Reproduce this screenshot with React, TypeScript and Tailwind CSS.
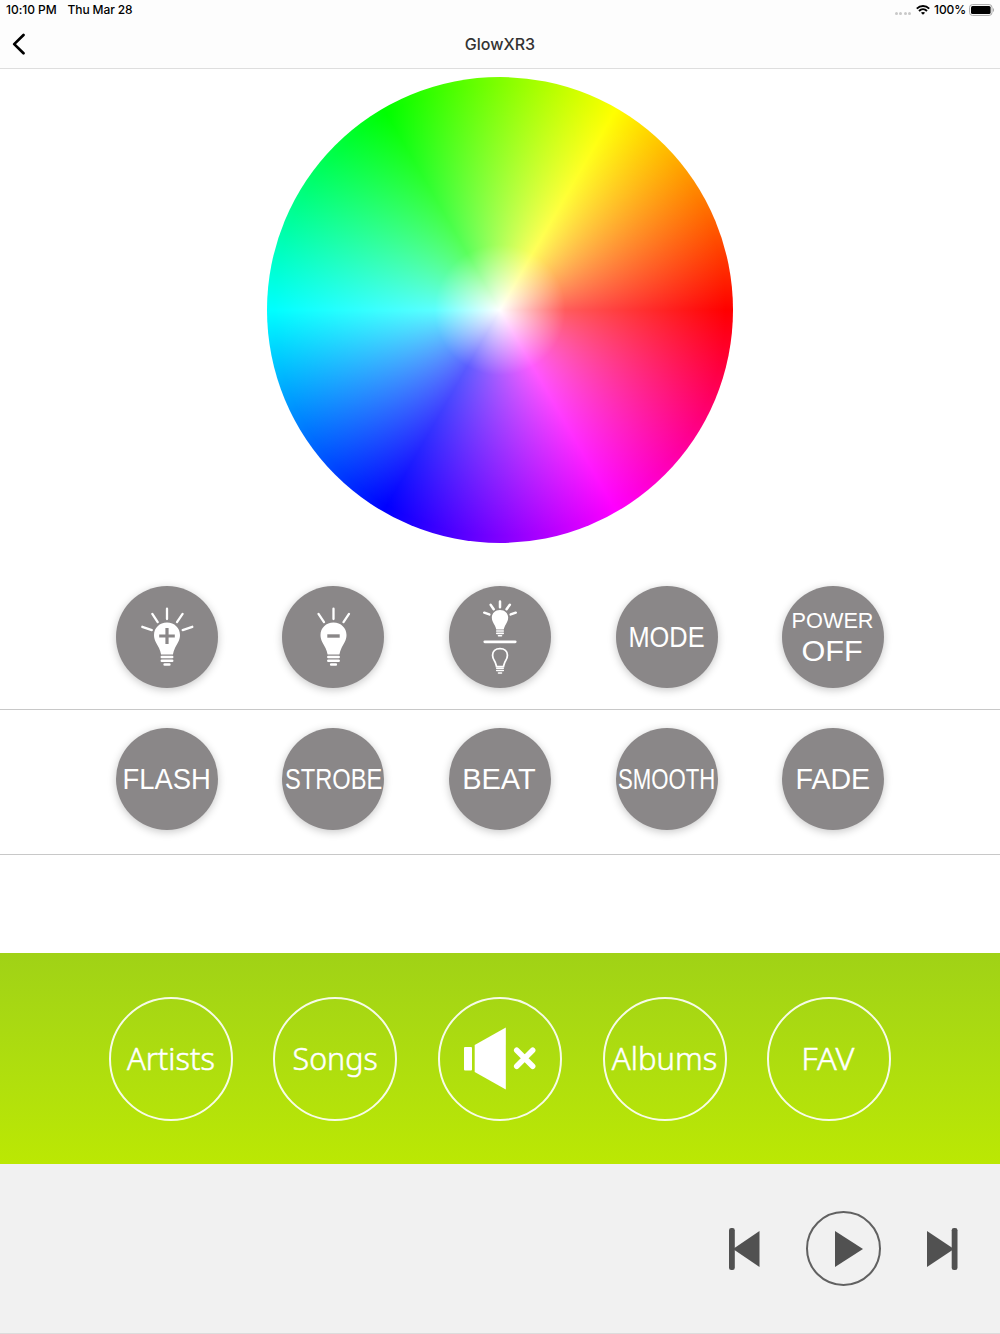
import type { ReactNode } from "react";

function Round({ children }: { children: ReactNode }) {
  return (
    <div className="flex justify-center">
      <button className="flex size-[102px] shrink-0 flex-col items-center justify-center rounded-full bg-[#8a8788] font-['Liberation_Sans',sans-serif] text-white shadow-[0_2px_8px_rgba(0,0,0,0.22)]">
        {children}
      </button>
    </div>
  );
}

function Label({ text, className }: { text: string; className: string }) {
  return <span className={`block text-[29px] leading-[30px] whitespace-nowrap ${className}`}>{text}</span>;
}

function Outline({ children }: { children: ReactNode }) {
  return (
    <div className="flex justify-center">
      <button className="flex size-[124px] shrink-0 items-center justify-center rounded-full border-2 border-white/90 font-['Noto_Sans',sans-serif] text-[31.500px] font-light text-white [-webkit-text-stroke:0.5px_white]">
        {children}
      </button>
    </div>
  );
}

/* Bulb silhouette centred on x = 0, globe centre at y = 0 */
const BULB = "M0-13C7.5-13 13-7.5 13-.5C13 5 10 8.500 8 12.500C7 14.800 6.300 17 5.900 19H-5.900C-6.300 17-7 14.800-8 12.500C-10 8.500-13 5-13-.5C-13-7.500-7.500-13 0-13Z";

function Base() {
  return (
    <g stroke="currentColor" strokeLinecap="round" strokeWidth="2.500">
      <path d="M-5.200 21.400H5.200M-5.200 25.200H5.200M-2.400 29H2.400" />
    </g>
  );
}

function BulbPlus() {
  return (
    <svg viewBox="0 0 102 102" className="size-[102px]" fill="none">
      <g transform="translate(51 49.500)">
        <path d={BULB} fill="currentColor" />
        <Base />
        <path d="M-7.800.5H7.800M0-7.400V8.400" stroke="#8a8788" strokeWidth="3.200" strokeLinecap="butt" />
        <path d="M0-26.800V-16.400M-14.700-21.600L-9.300-13.400M15.600-21.600L10-13.400M-24.700-8.700L-15.200-5.400M25.300-8.700L15.700-5.400" stroke="currentColor" strokeWidth="2.300" strokeLinecap="round" />
      </g>
    </svg>
  );
}

function BulbMinus() {
  return (
    <svg viewBox="0 0 102 102" className="size-[102px]" fill="none">
      <g transform="translate(51.500 49.500)">
        <path d={BULB} fill="currentColor" />
        <Base />
        <path d="M-6.200.5H6.200" stroke="#8a8788" strokeWidth="3.400" strokeLinecap="butt" />
        <path d="M0-26.800V-16.400M-15-21.600L-9.500-13.400M15.500-21.600L10-13.400" stroke="currentColor" strokeWidth="2.300" strokeLinecap="round" />
      </g>
    </svg>
  );
}

function BulbToggle() {
  return (
    <svg viewBox="0 0 102 102" className="size-[102px]" fill="none">
      <g transform="translate(51 32) scale(.63 .61)">
        <path d={BULB} fill="currentColor" />
        <Base />
        <path d="M0-27V-17.500M-14.800-21.600L-10-14.400M15.600-21.600L10.400-14.400M-25-8.700L-17-5.800M25-8.700L17-5.800" stroke="currentColor" strokeWidth="4" strokeLinecap="round" />
      </g>
      <path d="M35.800 55.800H66.200" stroke="currentColor" strokeWidth="2.800" strokeLinecap="round" />
      <g transform="translate(51 69.500) scale(.63 .6)">
        <path d="M0-11.500C7-11.500 11.800-7 11.800-.5C11.800 5 9 8 7.200 12.500C6.500 14.600 5.800 17 5.500 18.500H-5.500C-5.800 17-6.500 14.600-7.200 12.500C-9 8-11.800 5-11.800-.5C-11.800-7-7-11.500 0-11.500Z" stroke="currentColor" strokeWidth="2.800" />
        <Base />
      </g>
    </svg>
  );
}

function StatusBar() {
  return (
    <div className="flex h-5 items-center justify-between pr-[5px] pl-[6px] text-[12px] font-medium text-black">
      <div className="flex gap-[11px]">
        <span className="tracking-[-0.050px]">10:10 PM</span>
        <span className="tracking-[-0.100px]">Thu Mar 28</span>
      </div>
      <div className="flex items-center">
        <div className="mt-[7px] mr-[5px] flex gap-[1.300px]">
          <i className="size-[3px] rounded-full bg-[#c8c8c8]" />
          <i className="size-[3px] rounded-full bg-[#c8c8c8]" />
          <i className="size-[3px] rounded-full bg-[#c8c8c8]" />
          <i className="size-[3px] rounded-full bg-[#c8c8c8]" />
        </div>
        <svg viewBox="0 0 14 10" className="mr-[4px] h-[10px] w-[14px]" fill="none" stroke="currentColor" strokeWidth="1.900">
          <path d="M.8 3.600C4.300.1 9.700.1 13.200 3.600M3 6C5.300 3.700 8.700 3.700 11 6" />
          <path d="M7 9.800L4.900 7.700C6.100 6.600 7.900 6.600 9.100 7.700Z" fill="currentColor" stroke="none" />
        </svg>
        <span className="tracking-[-0.100px]">100%</span>
        <svg viewBox="0 0 26 12" className="ml-[3px] h-[12px] w-[26px]">
          <rect x=".6" y=".6" width="22.400" height="10.800" rx="2.800" fill="white" stroke="#a8a8a8" />
          <rect x="2" y="2" width="19.600" height="8" rx="1.500" />
          <path d="M24 4V8C25.400 7.500 25.400 4.500 24 4Z" fill="#a8a8a8" />
        </svg>
      </div>
    </div>
  );
}

export default function App() {
  return (
    <div className="flex h-[1334px] w-[1000px] flex-col overflow-hidden bg-white font-['Inter',sans-serif]">
      <header className="h-[69px] shrink-0 border-b border-[#dedede] bg-[#fdfdfd]">
        <StatusBar />
        <div className="grid h-12 grid-cols-3 items-center">
          <svg viewBox="0 0 14 22" className="ml-[12px] h-[22px] w-[14px]" fill="none" stroke="black" strokeWidth="2.700" strokeLinecap="round" strokeLinejoin="round">
            <path d="M11.500 2L2.200 11.100L11.500 20.300" />
          </svg>
          <h1 className="text-center text-[16px] font-medium text-[#333]">GlowXR3</h1>
        </div>
      </header>

      <section className="flex h-[517px] shrink-0 items-start justify-center pt-[7.500px]">
        <div className="size-[466px] rounded-full bg-[radial-gradient(closest-side,white,rgba(255,255,255,0.36)_28%,rgba(255,255,255,0)_97%),conic-gradient(from_90deg,#f00,#f0f,#00f,#0ff,#0f0,#ff0,#f00)]" />
      </section>

      <section className="grid h-[124px] shrink-0 grid-cols-5 border-b border-[#c8c8c8] px-[83.300px]">
        <Round><BulbPlus /></Round>
        <Round><BulbMinus /></Round>
        <Round><BulbToggle /></Round>
        <Round><Label text="MODE" className="mr-px scale-x-[0.875]" /></Round>
        <Round>
          <span className="-mt-[2px] mr-[2px] block scale-x-[0.985] text-[22px] leading-[30px]">POWER</span>
          <span className="mr-[2px] block scale-x-[1.020] text-[30px] leading-[30px]">OFF</span>
        </Round>
      </section>
      <section className="grid h-[145px] shrink-0 grid-cols-5 border-b border-[#c8c8c8] px-[83.300px] pt-[18px]">
        <Round><Label text="FLASH" className="scale-x-[0.945]" /></Round>
        <Round><Label text="STROBE" className="scale-x-[0.815]" /></Round>
        <Round><Label text="BEAT" className="mr-[2px]" /></Round>
        <Round><Label text="SMOOTH" className="scale-x-[0.765]" /></Round>
        <Round><Label text="FADE" className="mr-px scale-x-[0.985]" /></Round>
      </section>
      <div className="h-[97.500px] shrink-0" />

      <section className="grid h-[211.500px] shrink-0 grid-cols-5 items-center bg-linear-to-b from-[#a0d216] to-[#bbe803] px-[88.300px] pt-px">
        <Outline><span className="mb-[2px] scale-x-[0.98]">Artists</span></Outline>
        <Outline><span className="mb-[2px] scale-x-[0.965]">Songs</span></Outline>
        <Outline>
          <svg viewBox="0 0 120 120" className="size-[120px] shrink-0" fill="none">
            <rect x="24" y="48" width="8" height="23.500" rx="1" fill="white" />
            <path d="M34.700 46L65.800 28.500V90.500L34.700 73Z" fill="white" />
            <path d="M76.700 51.200L92.700 67.300M92.700 51.200L76.700 67.300" stroke="white" strokeWidth="5.500" strokeLinecap="round" />
          </svg>
        </Outline>
        <Outline><span className="mb-[2px] scale-x-[0.985]">Albums</span></Outline>
        <Outline><span className="mr-[3px] mb-[2px] scale-x-[1.030]">FAV</span></Outline>
      </section>

      <footer className="flex flex-1 items-center justify-end border-b border-[#dcdcdc] bg-[#f1f1f1] pr-[42px] text-[#515151]">
        <svg viewBox="0 0 32 42" className="h-[42px] w-[32px]" fill="currentColor">
          <rect width="5.800" height="42" rx="2.300" />
          <path d="M4 21L30.500 3V39Z" />
        </svg>
        <button className="mr-[45px] ml-[45px] flex size-[75px] items-center justify-center rounded-full border-2 border-[#616161]">
          <svg viewBox="0 0 28 36" className="ml-[10px] h-[36px] w-[28px]" fill="currentColor">
            <path d="M0 0L28 18L0 36Z" />
          </svg>
        </button>
        <svg viewBox="0 0 32 42" className="h-[42px] w-[32px]" fill="currentColor">
          <rect x="25.700" width="5.800" height="42" rx="2.300" />
          <path d="M28 21L1 3V39Z" />
        </svg>
      </footer>
    </div>
  );
}
